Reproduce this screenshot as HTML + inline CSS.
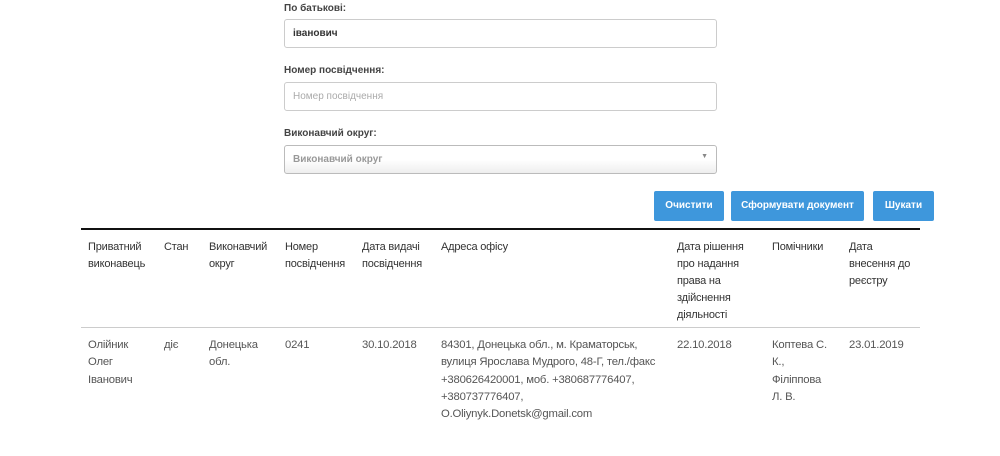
<!DOCTYPE html>
<html><head><meta charset="utf-8"><style>
body{margin:0;width:1000px;height:456px;background:#fff;font-family:"Liberation Sans",sans-serif;color:#333;position:relative;overflow:hidden}
.a{position:absolute;white-space:nowrap}
.lbl{font-size:10px;font-weight:bold;color:#444}
.inp{position:absolute;left:284px;width:433px;height:29px;border:1px solid #ccc;border-radius:3px;box-sizing:border-box;font-size:10px;line-height:28px;padding-left:8px}
.btn{position:absolute;top:191px;height:30px;background:#3e97dc;color:#fff;font-size:10px;font-weight:bold;line-height:30px;text-align:center;border-radius:2px}
.h{position:absolute;font-size:11px;line-height:17px;color:#333;top:239px;letter-spacing:-0.2px}
.d{position:absolute;font-size:11.3px;line-height:17.3px;color:#555;top:337px;letter-spacing:-0.2px}
</style></head><body>
<div class="a lbl" style="left:284px;top:3px">По батькові:</div>
<div class="inp" style="top:19px;font-weight:bold;color:#333">іванович</div>
<div class="a lbl" style="left:284px;top:65px">Номер посвідчення:</div>
<div class="inp" style="top:82px;color:#aaa">Номер посвідчення</div>
<div class="a lbl" style="left:284px;top:128px">Виконавчий округ:</div>
<div class="inp" style="top:145px;color:#999;font-weight:bold;background:linear-gradient(#fff 0%,#fff 50%,#eee 100%);border-color:#bbb">Виконавчий округ<span style="position:absolute;right:8px;top:-3px;font-size:7px;color:#888">▼</span></div>
<div class="btn" style="left:654px;width:70px">Очистити</div>
<div class="btn" style="left:731px;width:133px">Сформувати документ</div>
<div class="btn" style="left:873px;width:61px">Шукати</div>
<div class="a" style="left:81px;top:228px;width:839px;height:2px;background:#111"></div>
<div class="a" style="left:81px;top:327px;width:839px;height:1px;background:#ccc"></div>
<div class="h" style="left:88px">Приватний<br>виконавець</div>
<div class="h" style="left:164px">Стан</div>
<div class="h" style="left:209px">Виконавчий<br>округ</div>
<div class="h" style="left:285px">Номер<br>посвідчення</div>
<div class="h" style="left:362px">Дата видачі<br>посвідчення</div>
<div class="h" style="left:441px">Адреса офісу</div>
<div class="h" style="left:677px">Дата рішення<br>про надання<br>права на<br>здійснення<br>діяльності</div>
<div class="h" style="left:772px">Помічники</div>
<div class="h" style="left:849px">Дата<br>внесення до<br>реєстру</div>
<div class="d" style="left:88px">Олійник<br>Олег<br>Іванович</div>
<div class="d" style="left:164px">діє</div>
<div class="d" style="left:209px">Донецька<br>обл.</div>
<div class="d" style="left:285px">0241</div>
<div class="d" style="left:362px">30.10.2018</div>
<div class="d" style="left:441px">84301, Донецька обл., м. Краматорськ,<br>вулиця Ярослава Мудрого, 48-Г, тел./факс<br>+380626420001, моб. +380687776407,<br>+380737776407,<br>O.Oliynyk.Donetsk@gmail.com</div>
<div class="d" style="left:677px">22.10.2018</div>
<div class="d" style="left:772px">Коптева С.<br>К.,<br>Філіппова<br>Л. В.</div>
<div class="d" style="left:849px">23.01.2019</div>
</body></html>
